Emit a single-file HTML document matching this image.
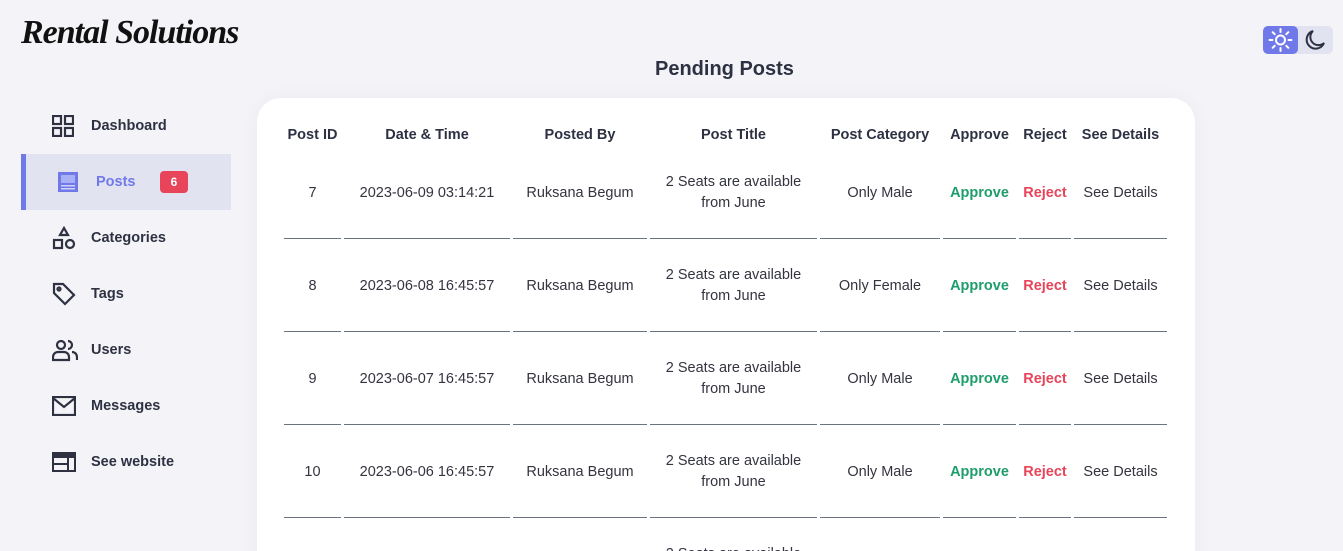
<!DOCTYPE html>
<html><head><meta charset="utf-8"><style>
*{margin:0;padding:0;box-sizing:border-box}
html,body{width:1343px;height:551px;overflow:hidden}
body{background:#f4f4f8;font-family:"Liberation Sans",sans-serif;color:#2d2d3a}
#wrap{position:relative;width:1343px;height:551px;overflow:hidden}
.logo{position:absolute;left:21px;top:14px;font-family:"Liberation Serif",serif;font-style:italic;font-weight:bold;font-size:34px;color:#111;letter-spacing:-1px}
.nav{position:absolute;left:21px;width:210px;height:56px;display:flex;align-items:center;font-weight:bold;font-size:14.5px;color:#2d3142}
.nav svg{position:absolute;left:31px}
.nav span{position:absolute;left:70px}
.active{background:#e1e3f1;border-left:5px solid #7178e8;color:#7178e8}
.badge{position:absolute;left:134px;background:#e8445a;color:#fff;border-radius:4px;font-size:12px;width:28px;height:22px;display:flex;align-items:center;justify-content:center}
h1{position:absolute;left:655px;top:58px;font-size:20px;font-weight:bold;color:#2d3142}
.toggle{position:absolute;left:1263px;top:26px;width:70px;height:28px;background:#e1e3f1;border-radius:5px}
.toggle .sun{position:absolute;left:0;top:0;width:35px;height:28px;background:#7178e8;border-radius:5px}
.card{position:absolute;left:257px;top:98px;width:938px;height:500px;background:#fff;border-radius:24px;box-shadow:0 0 20px rgba(0,0,0,0.04)}
.c{position:absolute;text-align:center;font-size:14.5px;display:flex;align-items:center;justify-content:center;line-height:21px;color:#33343f}
.h{font-weight:bold;color:#2d3142}
.line{position:absolute;height:1px;background:#6b7280}
.ap{color:#1f9d6c;font-weight:bold}
.rj{color:#e8445a;font-weight:bold}
</style></head><body><div id="wrap">
<div class="logo">Rental Solutions</div>

<div class="nav" style="top:98px"><svg width="22" height="22" viewBox="0 0 22 22" fill="none" stroke="#2d3142" stroke-width="2.2"><rect x="1" y="1" width="8" height="8"/><rect x="13" y="1" width="8" height="8"/><rect x="1" y="13" width="8" height="8"/><rect x="13" y="13" width="8" height="8"/></svg><span>Dashboard</span></div>
<div class="nav active" style="top:154px"><svg width="22" height="22" viewBox="0 0 22 22"><rect x="1" y="1" width="20" height="20" fill="#7178e8"/><rect x="4" y="4" width="14" height="8" fill="#aab0f5"/><rect x="4" y="14" width="14" height="1.5" fill="#cfd2fa"/><rect x="4" y="17" width="14" height="1.5" fill="#cfd2fa"/></svg><span>Posts</span><div class="badge">6</div></div>
<div class="nav" style="top:210px"><svg width="24" height="24" viewBox="0 0 24 24" fill="none" stroke="#2d3142" stroke-width="2.2"><path d="M12 2 L16 9 L8 9 Z"/><rect x="2" y="14" width="8" height="8"/><circle cx="18" cy="18" r="4"/></svg><span>Categories</span></div>
<div class="nav" style="top:266px"><svg width="24" height="24" viewBox="0 0 24 24" fill="none" stroke="#2d3142" stroke-width="2.2"><path d="M2 2 H11 L22 13 L13 22 L2 11 Z"/><circle cx="7" cy="7" r="1.5"/></svg><span>Tags</span></div>
<div class="nav" style="top:322px"><svg width="26" height="24" viewBox="0 0 26 24" fill="none" stroke="#2d3142" stroke-width="2.2"><circle cx="9" cy="7" r="4"/><path d="M1 22 V19 A5 5 0 0 1 6 14 H12 A5 5 0 0 1 17 19 V22 Z"/><path d="M16 3 A4 4 0 0 1 16 11"/><path d="M20 14 A5 5 0 0 1 25 19 V22"/></svg><span>Users</span></div>
<div class="nav" style="top:378px"><svg width="24" height="20" viewBox="0 0 24 20" fill="none" stroke="#2d3142" stroke-width="2.2"><rect x="1" y="1" width="22" height="18"/><path d="M1 2 L12 11 L23 2"/></svg><span>Messages</span></div>
<div class="nav" style="top:434px"><svg width="24" height="20" viewBox="0 0 24 20"><rect x="0" y="0" width="24" height="20" fill="#2d3142"/><rect x="2" y="6" width="13" height="5" fill="#f4f4f8"/><rect x="2" y="13" width="13" height="5" fill="#f4f4f8"/><rect x="17" y="6" width="5" height="12" fill="#f4f4f8"/></svg><span>See website</span></div>

<h1>Pending Posts</h1>
<div class="toggle"><div class="sun"><svg width="35" height="28" viewBox="0 0 35 28" stroke="#fff" stroke-width="2" fill="none" stroke-linecap="round"><circle cx="17.5" cy="14" r="4.5"/><path d="M17.5 3v3M17.5 22v3M6.5 14h3M25.5 14h3M9.7 6.2l2 2M23.3 19.8l2 2M9.7 21.8l2-2M23.3 8.2l2-2"/></svg></div><svg style="position:absolute;left:35px;top:0" width="35" height="28" viewBox="0 0 35 28" fill="none" stroke="#2d3142" stroke-width="2"><path d="M15 5 A9 9 0 1 0 26 17 A7 7 0 0 1 15 5 Z"/></svg></div>

<div class="card"></div>
<div id="t"></div>
</div>
<script>
var cols=[[284,341],[344,510],[513,647],[650,817],[820,940],[943,1016],[1019,1071],[1074,1167]];
var hd=["Post ID","Date &amp; Time","Posted By","Post Title","Post Category","Approve","Reject","See Details"];
var rows=[["7","2023-06-09 03:14:21","Only Male"],["8","2023-06-08 16:45:57","Only Female"],["9","2023-06-07 16:45:57","Only Male"],["10","2023-06-06 16:45:57","Only Male"],["11","2023-06-05 16:45:57","Only Male"]];
var h="";
cols.forEach(function(c,i){h+='<div class="c h" style="left:'+c[0]+'px;width:'+(c[1]-c[0])+'px;top:124px;height:22px">'+hd[i]+'</div>';});
rows.forEach(function(r,k){
 var cy=193+93*k, top=cy-30;
 var vals=[r[0],r[1],"Ruksana Begum","2 Seats are available<br>from June",r[2],'<span class="ap">Approve</span>','<span class="rj">Reject</span>',"See Details"];
 cols.forEach(function(c,i){
  h+='<div class="c" style="left:'+c[0]+'px;width:'+(c[1]-c[0])+'px;top:'+top+'px;height:60px">'+vals[i]+'</div>';
  h+='<div class="line" style="left:'+c[0]+'px;width:'+(c[1]-c[0])+'px;top:'+(cy+45)+'px"></div>';
 });
});
document.getElementById("t").innerHTML=h;
</script>
</body></html>
